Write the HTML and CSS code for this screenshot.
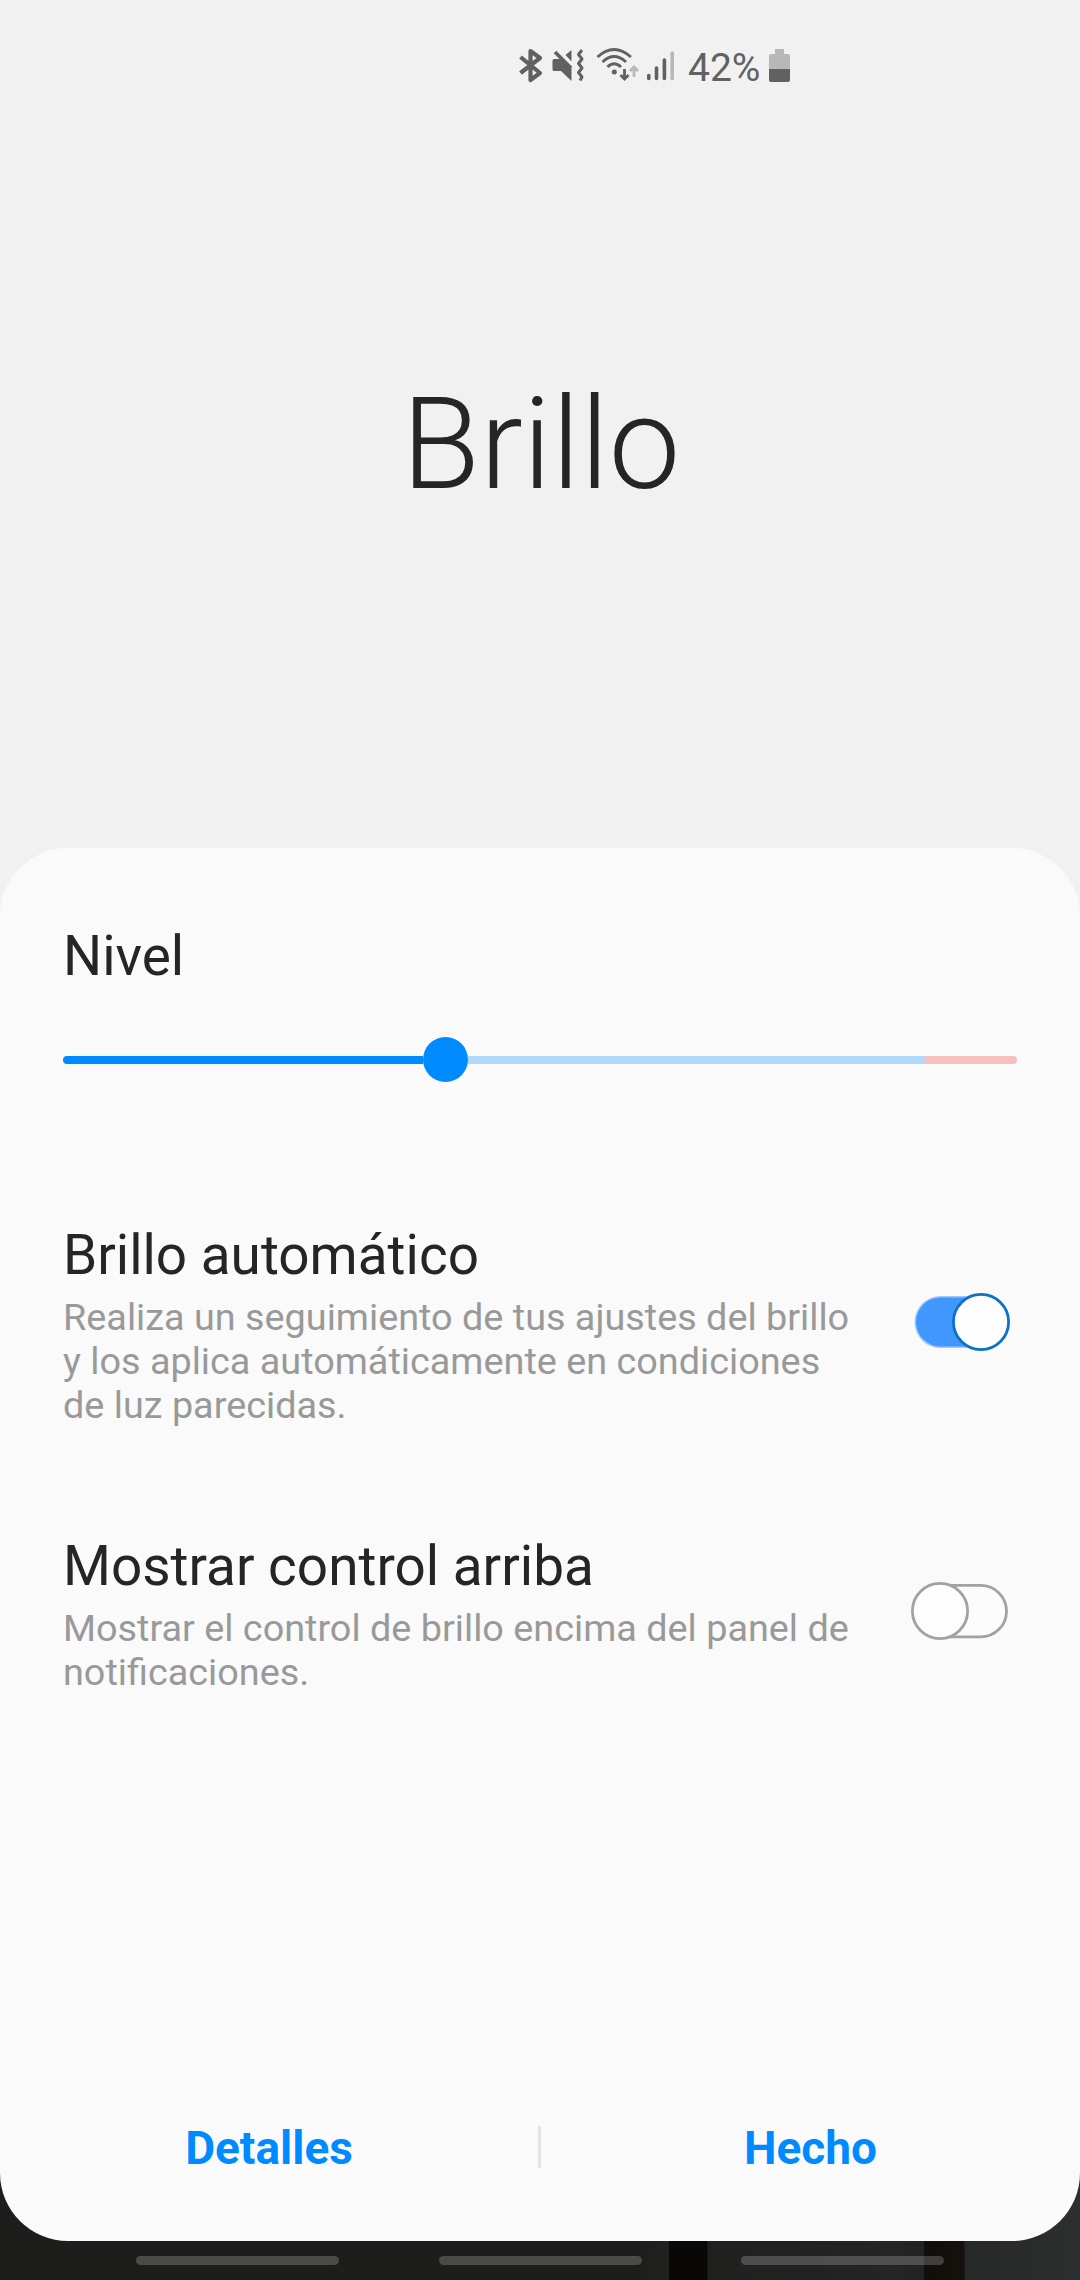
FILE: index.html
```html
<!DOCTYPE html>
<html lang="es">
<head>
    <meta charset="UTF-8">
    <meta name="viewport" content="width=device-width, initial-scale=1.0">
    <title>Brillo</title>
    <link rel="stylesheet" href="styles.css">
</head>
<body>

    <div class="status-bar">
        <svg class="status-icons" width="160" height="40" viewBox="0 0 160 40" fill="none" stroke="#616161">
            <!-- Bluetooth -->
            <path d="M2.500 11 L22 27 L12.500 34 V5 L22 12 L2.500 27" stroke-width="4.200" stroke-linejoin="round"/>
            <!-- Muted / vibrate -->
            <path d="M36 13 H44 L53.500 22 V35 L43 25 H36 Q34.500 25 34.500 23.500 V14.500 Q34.500 13 36 13Z M47.500 9 L53.500 4 V15.500Z" fill="#616161" stroke="none"/>
            <path d="M37 6 L53 22" stroke-width="3.500"/>
            <path d="M64 4 L60.500 8.500 L64 13 L60.500 17.500 L64 22 L60.500 26.500 L64 31 L62 34.500" stroke-width="3" stroke-linejoin="round"/>
            <!-- Wifi -->
            <path d="M79.500 11 Q96 -4 113 11 M84.500 16 Q96 5 108 16 M89.500 21 Q96 14.500 103 21" stroke-width="3"/>
            <circle cx="96.300" cy="26" r="2.500" fill="#616161" stroke="none"/>
            <path d="M106.500 23 V33 M102.500 29 L106.500 33 L110.500 29" stroke-width="2.800"/>
            <path d="M116 31 V21 M112 25 L116 21 L120 25" stroke="#b8b8b8" stroke-width="2.800"/>
            <!-- Signal -->
            <path d="M130.800 29.500 V32.500 M138.500 22 V32.500 M146.400 14 V32.500" stroke-width="3.600" stroke-linecap="round"/>
            <path d="M154.200 7 V32.500" stroke="#b8b8b8" stroke-width="3.600" stroke-linecap="round"/>
        </svg>
        <span class="battery-text">42%</span>
        <svg class="battery-icon" width="21" height="33" viewBox="0 0 21 33">
            <path d="M6 0 H15 V5 H19 Q21 5 21 7 V20 H0 V7 Q0 5 2 5 H6Z" fill="#b8b8b8"/>
            <path d="M0 20 H21 V31 Q21 33 19 33 H2 Q0 33 0 31Z" fill="#616161"/>
        </svg>
    </div>

    <h1 class="title">Brillo</h1>

    <div class="panel">
        <div class="level">
            <div class="label">Nivel</div>
            <div class="slider">
                <div class="slider-fill"></div>
                <div class="slider-thumb"></div>
                <div class="slider-rest"></div>
                <div class="slider-limit"></div>
            </div>
        </div>

        <div class="option">
            <div class="option-text">
                <div class="label">Brillo automático</div>
                <div class="description">Realiza un seguimiento de tus ajustes del brillo<br>y los aplica automáticamente en condiciones<br>de luz parecidas.</div>
            </div>
            <svg class="toggle" width="102" height="60" viewBox="0 0 102 60">
                <rect x="4.500" y="4" width="92" height="52" rx="26" fill="#9fc9fb"/>
                <rect x="6" y="5.500" width="89" height="49" rx="24.500" fill="#4297ff"/>
                <circle cx="71" cy="30" r="27.600" fill="#fdfdfd" stroke="#0c71c8" stroke-width="2.800"/>
            </svg>
        </div>

        <div class="option option-top">
            <div class="option-text">
                <div class="label">Mostrar control arriba</div>
                <div class="description">Mostrar el control de brillo encima del panel de<br>notificaciones.</div>
            </div>
            <svg class="toggle" width="102" height="60" viewBox="0 0 102 60" stroke="#a2a2a2" stroke-width="2.800">
                <rect x="6" y="4.400" width="90.500" height="51.500" rx="25.750" fill="#fcfcfc"/>
                <circle cx="30" cy="30" r="27.600" fill="#fdfdfd"/>
            </svg>
        </div>

        <div class="actions">
            <div class="action">Detalles</div>
            <div class="divider"></div>
            <div class="action">Hecho</div>
        </div>
    </div>

    <div class="nav-bar">
        <div class="nav-hint"></div>
        <div class="nav-hint"></div>
        <div class="nav-hint"></div>
    </div>

</body>
</html>
```
FILE: styles.css
```css
* {
    box-sizing: border-box;
}
body {
    font-family: Roboto, sans-serif;
    display: flex;
    flex-direction: column;
    height: 2280px;
    margin: 0;
    overflow: hidden;
    color: #252525;
    background: linear-gradient(#f1f1f1 0 1200px, transparent 1200px),
        linear-gradient(90deg, #1d1d1b 0, #1d1d1b 640px, #222220 669px, #090806 669px, #090806 707px, #20201f 708px, #222222 820px, #242525 900px, #202223 924px, #110e0a 924px, #15110d 964px, #272828 965px, #2c2f2f 1080px);
}
.status-bar {
    display: flex;
    height: 245px;
    padding: 46px 0 0 518px;
}
.status-icons {
    flex: none;
}
.battery-text {
    width: 81px;
    margin-left: 10px;
    font-size: 39px;
    line-height: 44px;
    color: #616161;
}
.battery-icon {
    margin-top: 3px;
}
.title {
    height: 603px;
    margin: 0;
    padding: 126px 0 0 2px;
    font-size: 127.5px;
    font-weight: 300;
    line-height: 148px;
    text-align: center;
}
.panel {
    display: flex;
    flex-direction: column;
    height: 1393px;
    border-radius: 68px;
    background-color: #fafafa;
}
.level {
    height: 375px;
    padding: 76px 63px 0;
}
.label {
    font-size: 54.9px;
    line-height: 64px;
}
.slider {
    display: flex;
    align-items: center;
    height: 45px;
    margin-top: 49px;
}
.slider-fill {
    width: 360px;
    height: 8px;
    border-radius: 4px 0 0 4px;
    background-color: #008aff;
}
.slider-thumb {
    width: 45px;
    height: 45px;
    border-radius: 50%;
    background-color: #008aff;
}
.slider-rest {
    width: 460px;
    height: 8px;
    background-color: #afd9fb;
}
.slider-limit {
    flex: 1;
    height: 8px;
    margin-left: -4px;
    border-radius: 4px;
    background-color: #f6c0bf;
}
.option {
    display: flex;
    align-items: center;
    height: 204px;
    padding: 0 68px 0 63px;
}
.option-top {
    height: 160px;
    margin-top: 107px;
}
.option-text {
    flex: 1;
}
.description {
    margin-top: 8px;
    font-size: 37.8px;
    line-height: 44px;
    color: #999;
    white-space: nowrap;
}
.toggle {
    margin-bottom: 6px;
}
.actions {
    display: grid;
    grid-template-columns: 538px 3px 539px;
    align-items: center;
    height: 60px;
    margin-top: auto;
    margin-bottom: 64px;
}
.action {
    padding-top: 2px;
    font-size: 46px;
    font-weight: 700;
    text-align: center;
    color: #008aff;
}
.divider {
    height: 42px;
    background-color: #e4e4e4;
}
.nav-bar {
    display: flex;
    justify-content: center;
    gap: 99.5px;
    height: 39px;
    padding-top: 15px;
}
.nav-hint {
    width: 203px;
    height: 9px;
    border-radius: 5px;
    background-color: rgba(255, 255, 255, 0.2);
}
```
